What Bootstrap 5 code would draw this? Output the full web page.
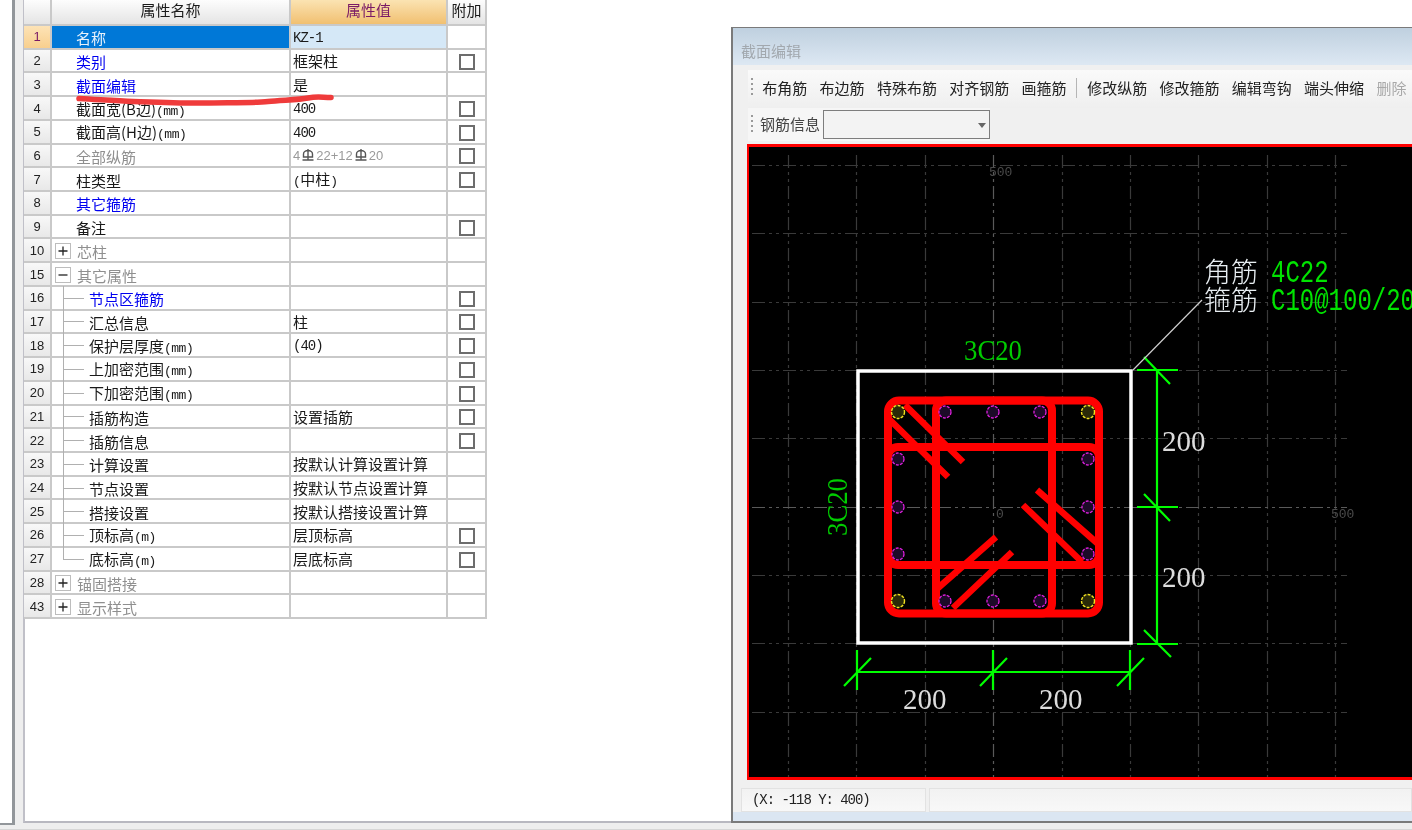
<!DOCTYPE html>
<html lang="zh">
<head>
<meta charset="utf-8">
<title>截面编辑</title>
<link rel="stylesheet" href="https://cdn.jsdelivr.net/npm/bootstrap@5.3.0/dist/css/bootstrap.min.css">
<style>
html,body{margin:0;background:#fff;overflow:hidden}
body{font-family:"Noto Sans CJK SC","Liberation Sans",sans-serif;color:#1a1a1a}
.stage{position:relative;width:1412px;height:830px;overflow:hidden;background:#eeeeee;filter:blur(.35px)}
.side-strip{width:15px;height:825px;flex:none;background:#fff;border-right:3px solid #92969a;border-bottom:2px solid #92969a}
.main-pane{flex:1;height:823px;margin-left:8px;border-left:2px solid #c0c0c8;border-bottom:2px solid #b8b8c0;background:#fff}
.foot-band{position:absolute;left:0;right:0;top:829px;height:1px;background:#d6d6d6}
.prop-grid{width:462px;margin-left:-1px;table-layout:fixed;border-collapse:collapse;font-size:15px;line-height:1}
.prop-grid th,.prop-grid td{padding:0;border:1px solid #c9c9c9;border-width:0 2px 2px 0;height:23.72px;font-weight:400;vertical-align:middle;white-space:nowrap;background:#fff;box-shadow:none}
.prop-grid thead th{height:25px;padding-bottom:6px;text-align:center;background:linear-gradient(#fdfdfd,#e4e4e4);color:#1a1a1a}
.prop-grid thead th.val-head{background:linear-gradient(#fbe3b2,#f1c071);color:#7a1a66}
.prop-grid td.num{text-align:center;font:13px "Liberation Sans",sans-serif;background:linear-gradient(#f8f8f8,#e8e8e8);color:#222}
.prop-grid td.num-on{background:linear-gradient(#fde3b6,#f8cf8e);color:#7a1a66}
.prop-grid td.name{padding-left:24px;padding-top:2px;color:#1a1a1a}
.prop-grid td.name-on{background:#0078d7;color:#e8f2fb}
.prop-grid td.val{padding-left:2px;color:#1a1a1a}
.prop-grid td.val-on{background:#d5e8f7}
.prop-grid td.extra{text-align:center}
.prop-grid td.group{padding-left:3px;padding-top:2px;color:#8f8f8f}
.prop-grid td.leaf{position:relative;padding-left:37px;padding-top:2px;color:#1a1a1a}
.leaf::before{content:"";position:absolute;left:11px;top:-1px;bottom:-1px;border-left:1px solid #b0b0b0}
.leaf::after{content:"";position:absolute;left:11px;width:21px;top:50%;border-top:1px solid #b0b0b0}
.leaf-end::before{bottom:50%}
.prop-grid td.ln-blue{color:#0000f0}
.prop-grid td.ln-grey{color:#8f8f8f}
.latin{font-family:"Liberation Mono",monospace;font-size:13px;letter-spacing:-.5px}
.prop-grid td.val.latin{font-size:14px;letter-spacing:-1px;padding-top:2px}
.prop-grid td.val.rebar-val{font:13px "Liberation Sans",sans-serif;color:#9a9a9a}
.rebar-val svg{vertical-align:-1px;margin:0 2px}
.tick-box{display:inline-block;width:16px;height:16px;border:2px solid #6d6d6d;background:#fff;vertical-align:middle}
.fold{display:inline-flex;width:16px;height:16px;border:1px solid #bdbdbd;margin-right:6px;vertical-align:middle;flex:none}
.group-in{display:flex;align-items:center}
.ink-mark{position:absolute;left:70px;top:88px;pointer-events:none}
.app-win{position:absolute;left:731px;top:27px;right:0;height:796px;background:#f0f0f0;border:1px solid #7a7a7a;border-left-width:2px;border-right:0;border-bottom-width:2px}
.win-title{height:37px;padding:14px 0 0 8px;font-size:15px;line-height:18px;color:#a2a8ae;background:linear-gradient(#bfd0df,#dde8f3)}
.tool-row{height:38px;margin:5px 0 0 15px;padding:0 0 2px 3px;background:linear-gradient(#fafafa,#efefef);gap:12.3px;font-size:15px;color:#222;white-space:nowrap}
.grip{width:2px;height:20px;margin-right:-3px;background:repeating-linear-gradient(#9a9a9a 0 2px,transparent 2px 5px)}
.tool-sep{width:1px;height:20px;margin:0 -2.500px;background:#b5b5b5}
.tool-off{color:#a8a8a8}
.tool-row-2{width:242px;height:33px;margin:0 0 0 15px;padding-left:3px;background:#f6f6f6;gap:10px;font-size:15px;color:#444;white-space:nowrap}
.fake-select{width:167px;height:29px;margin-left:-7px;border:1px solid #7d7d7d;background:#f3f3f3;position:relative}
.fake-select::after{content:"";position:absolute;right:3px;top:12px;border:4px solid transparent;border-top:5px solid #666;border-bottom:0}
.cad-box{height:636px;margin:3px 0 0 14px;background:#000;border:solid #f00;border-width:3px 0 3px 2px}
.cad-box svg{display:block}
.stat-row{height:24px;margin:8px 0 0 8px;gap:3px;font:14px "Liberation Mono",monospace;letter-spacing:-1.050px;color:#222}
.stat-cell{height:24px;background:linear-gradient(#f2f2f2,#f8f8f8);border:1px solid #e2e2e2;padding:3px 0 0 10px;line-height:16px}
.stat-cell-a{width:185px}
.win-body-foot{position:absolute;left:0;right:0;bottom:0;height:9px;background:#dbe6f2}
.cad-serif{font-family:"Liberation Serif",serif}
.cad-mono{font-family:"Liberation Mono",monospace}
.cad-cjk{font-family:"Noto Sans CJK SC",sans-serif;font-weight:300}
</style>
</head>
<body>
<div class="stage">
  <div class="d-flex align-items-start">
    <div class="side-strip"></div>
    <div class="main-pane">
      <table class="prop-grid">
        <colgroup><col style="width:27px"><col style="width:239px"><col style="width:157px"><col style="width:39px"></colgroup>
        <thead><tr><th></th><th>属性名称</th><th class="val-head">属性值</th><th>附加</th></tr></thead>
        <tbody>
          <tr><td class="num num-on">1</td><td class="name name-on">名称</td><td class="val val-on latin">KZ-1</td><td class="extra"></td></tr>
          <tr><td class="num">2</td><td class="name ln-blue">类别</td><td class="val">框架柱</td><td class="extra"><span class="tick-box"></span></td></tr>
          <tr><td class="num">3</td><td class="name ln-blue">截面编辑</td><td class="val">是</td><td class="extra"></td></tr>
          <tr><td class="num">4</td><td class="name">截面宽(B边)<span class="latin">(mm)</span></td><td class="val latin">400</td><td class="extra"><span class="tick-box"></span></td></tr>
          <tr><td class="num">5</td><td class="name">截面高(H边)<span class="latin">(mm)</span></td><td class="val latin">400</td><td class="extra"><span class="tick-box"></span></td></tr>
          <tr><td class="num">6</td><td class="name ln-grey">全部纵筋</td><td class="val rebar-val">4<svg width="12" height="12" viewBox="0 0 12 12" fill="none" stroke="#555" stroke-width="1.4"><path d="M1.500 8V5a4.500 3.500 0 0 1 9 0v3zM6 0v11M.5 11h11"/></svg>22+12<svg width="12" height="12" viewBox="0 0 12 12" fill="none" stroke="#555" stroke-width="1.4"><path d="M1.500 8V5a4.500 3.500 0 0 1 9 0v3zM6 0v11M.5 11h11"/></svg>20</td><td class="extra"><span class="tick-box"></span></td></tr>
          <tr><td class="num">7</td><td class="name">柱类型</td><td class="val"><span class="latin">(</span>中柱<span class="latin">)</span></td><td class="extra"><span class="tick-box"></span></td></tr>
          <tr><td class="num">8</td><td class="name ln-blue">其它箍筋</td><td class="val"></td><td class="extra"></td></tr>
          <tr><td class="num">9</td><td class="name">备注</td><td class="val"></td><td class="extra"><span class="tick-box"></span></td></tr>
          <tr><td class="num">10</td><td class="group"><div class="group-in"><span class="fold"><svg width="14" height="14" viewBox="0 0 14 14"><path d="M2.500 7h9M7 2.500v9" stroke="#222" stroke-width="1.300"/></svg></span>芯柱</div></td><td class="val"></td><td class="extra"></td></tr>
          <tr><td class="num">15</td><td class="group"><div class="group-in"><span class="fold"><svg width="14" height="14" viewBox="0 0 14 14"><path d="M2.500 7h9" stroke="#222" stroke-width="1.300"/></svg></span>其它属性</div></td><td class="val"></td><td class="extra"></td></tr>
          <tr><td class="num">16</td><td class="leaf ln-blue">节点区箍筋</td><td class="val"></td><td class="extra"><span class="tick-box"></span></td></tr>
          <tr><td class="num">17</td><td class="leaf">汇总信息</td><td class="val">柱</td><td class="extra"><span class="tick-box"></span></td></tr>
          <tr><td class="num">18</td><td class="leaf">保护层厚度<span class="latin">(mm)</span></td><td class="val latin">(40)</td><td class="extra"><span class="tick-box"></span></td></tr>
          <tr><td class="num">19</td><td class="leaf">上加密范围<span class="latin">(mm)</span></td><td class="val"></td><td class="extra"><span class="tick-box"></span></td></tr>
          <tr><td class="num">20</td><td class="leaf">下加密范围<span class="latin">(mm)</span></td><td class="val"></td><td class="extra"><span class="tick-box"></span></td></tr>
          <tr><td class="num">21</td><td class="leaf">插筋构造</td><td class="val">设置插筋</td><td class="extra"><span class="tick-box"></span></td></tr>
          <tr><td class="num">22</td><td class="leaf">插筋信息</td><td class="val"></td><td class="extra"><span class="tick-box"></span></td></tr>
          <tr><td class="num">23</td><td class="leaf">计算设置</td><td class="val">按默认计算设置计算</td><td class="extra"></td></tr>
          <tr><td class="num">24</td><td class="leaf">节点设置</td><td class="val">按默认节点设置计算</td><td class="extra"></td></tr>
          <tr><td class="num">25</td><td class="leaf">搭接设置</td><td class="val">按默认搭接设置计算</td><td class="extra"></td></tr>
          <tr><td class="num">26</td><td class="leaf">顶标高<span class="latin">(m)</span></td><td class="val">层顶标高</td><td class="extra"><span class="tick-box"></span></td></tr>
          <tr><td class="num">27</td><td class="leaf leaf-end">底标高<span class="latin">(m)</span></td><td class="val">层底标高</td><td class="extra"><span class="tick-box"></span></td></tr>
          <tr><td class="num">28</td><td class="group"><div class="group-in"><span class="fold"><svg width="14" height="14" viewBox="0 0 14 14"><path d="M2.500 7h9M7 2.500v9" stroke="#222" stroke-width="1.300"/></svg></span>锚固搭接</div></td><td class="val"></td><td class="extra"></td></tr>
          <tr><td class="num">43</td><td class="group"><div class="group-in"><span class="fold"><svg width="14" height="14" viewBox="0 0 14 14"><path d="M2.500 7h9M7 2.500v9" stroke="#222" stroke-width="1.300"/></svg></span>显示样式</div></td><td class="val"></td><td class="extra"></td></tr>
        </tbody>
      </table>
    </div>
  </div>

  <svg class="ink-mark" width="270" height="22" viewBox="70 88 270 22" fill="none"><path d="M79 98.500C105 100 118 101 133 101.500S185 103.500 205 103S255 103 268 101.500S298 100 308 98S322 97.500 331 97.500" stroke="#ef3b3b" stroke-width="5.500" stroke-linecap="round"/></svg>

  <div class="foot-band"></div>

  <div class="app-win">
    <div class="win-title">截面编辑</div>
    <div class="tool-row d-flex align-items-center">
      <span class="grip"></span><span>布角筋</span><span>布边筋</span><span>特殊布筋</span><span>对齐钢筋</span><span>画箍筋</span><span class="tool-sep"></span><span>修改纵筋</span><span>修改箍筋</span><span>编辑弯钩</span><span>端头伸缩</span><span class="tool-off">删除</span>
    </div>
    <div class="tool-row-2 d-flex align-items-center">
      <span class="grip"></span><span>钢筋信息</span><span class="fake-select"></span>
    </div>
    <div class="cad-box">
      <svg width="666" height="630" viewBox="749 147 666 630">
        <g fill="none" stroke="#3a3a3a" stroke-width="1.200" stroke-dasharray="13 4 3 4 3 4">
          <path d="M788.500 155V780M856.500 155V780M925.500 155V780M1062.500 155V780M1130.500 155V780M1198.500 155V780M1267.500 155V780M1335.500 155V780"/>
          <path d="M752 165.500H1347M752 233.500H1347M752 302.500H1347M752 370.500H1347M752 438.500H1347M752 575.500H1347M752 643.500H1347M752 712.500H1347"/>
          <path d="M993.500 155V780M752 507.500H1347" stroke="#5a5a5a"/>
        </g>
        <g fill="#4a4a4a" font-family="Liberation Mono, monospace" font-size="13">
          <text x="989" y="176">500</text>
          <text x="996" y="518">0</text>
          <text x="1331" y="518">500</text>
        </g>
        <rect x="858" y="371" width="273" height="272" fill="none" stroke="#fff" stroke-width="3.500"/>
        <g fill="none" stroke="#f00" stroke-width="8">
          <rect x="888" y="400.500" width="211" height="213" rx="11"/>
          <rect x="936" y="400.500" width="116" height="213" rx="10"/>
          <rect x="888" y="447" width="211" height="118" rx="10"/>
        </g>
        <g stroke="#f00" stroke-width="6.500" stroke-linecap="butt">
          <path d="M905 405L963 462M890 420L948 477M938 588L996 537M953 608L1012 552M1037 490L1097 543M1023 505L1082 562"/>
        </g>
        <g fill="#1c0a28" stroke="#e020e0" stroke-width="1.300" stroke-dasharray="3 1.200">
          <circle cx="945" cy="412" r="6"/><circle cx="993" cy="412" r="6"/><circle cx="1040" cy="412" r="6"/>
          <circle cx="898" cy="459" r="6"/><circle cx="898" cy="507" r="6"/><circle cx="898" cy="554" r="6"/>
          <circle cx="1088" cy="459" r="6"/><circle cx="1088" cy="507" r="6"/><circle cx="1088" cy="554" r="6"/>
          <circle cx="945" cy="601" r="6"/><circle cx="993" cy="601" r="6"/><circle cx="1040" cy="601" r="6"/>
        </g>
        <g fill="#2a2a08" stroke="#f0e020" stroke-width="1.400" stroke-dasharray="3 1.200">
          <circle cx="898" cy="412" r="6.500"/><circle cx="1088" cy="412" r="6.500"/><circle cx="898" cy="601" r="6.500"/><circle cx="1088" cy="601" r="6.500"/>
        </g>
        <g stroke="#00ff00" stroke-width="2.200" fill="none">
          <path d="M1157 370V644M1137 370H1178M1137 507H1178M1137 644H1178M1144 357L1170 384M1144 494L1170 521M1144 630L1171 657"/>
          <path d="M857 672H1130M857 650V690M993 650V690M1130 650V690M844 686L871 658M980 686L1007 658M1117 686L1144 658"/>
        </g>
        <path d="M1133 370L1202 300" stroke="#cfcfcf" stroke-width="1.200"/>
        <g class="cad-serif" fill="#dcdcdc" font-size="29">
          <text x="903" y="709">200</text>
          <text x="1039" y="709">200</text>
          <text x="1162" y="451">200</text>
          <text x="1162" y="587">200</text>
        </g>
        <g class="cad-serif" fill="#00cc00" font-size="29">
          <text x="964" y="360" textLength="58" lengthAdjust="spacingAndGlyphs">3C20</text>
          <text transform="translate(847 536) rotate(-90)" textLength="58" lengthAdjust="spacingAndGlyphs">3C20</text>
        </g>
        <g class="cad-cjk" fill="#e8eef2" font-size="27">
          <text x="1204" y="282">角筋</text>
          <text x="1204" y="310">箍筋</text>
        </g>
        <g class="cad-mono" fill="#00e400" font-size="24">
          <text transform="translate(1271 282) scale(1 1.300)">4C22</text>
          <text transform="translate(1271 310) scale(1 1.300)">C10@100/200</text>
        </g>
      </svg>
    </div>
    <div class="stat-row d-flex">
      <div class="stat-cell stat-cell-a">(X: -118 Y: 400)</div>
      <div class="stat-cell flex-grow-1"></div>
    </div>
    <div class="win-body-foot"></div>
  </div>
</div>
<script src="https://cdn.jsdelivr.net/npm/bootstrap@5.3.0/dist/js/bootstrap.bundle.min.js"></script>
</body>
</html>
